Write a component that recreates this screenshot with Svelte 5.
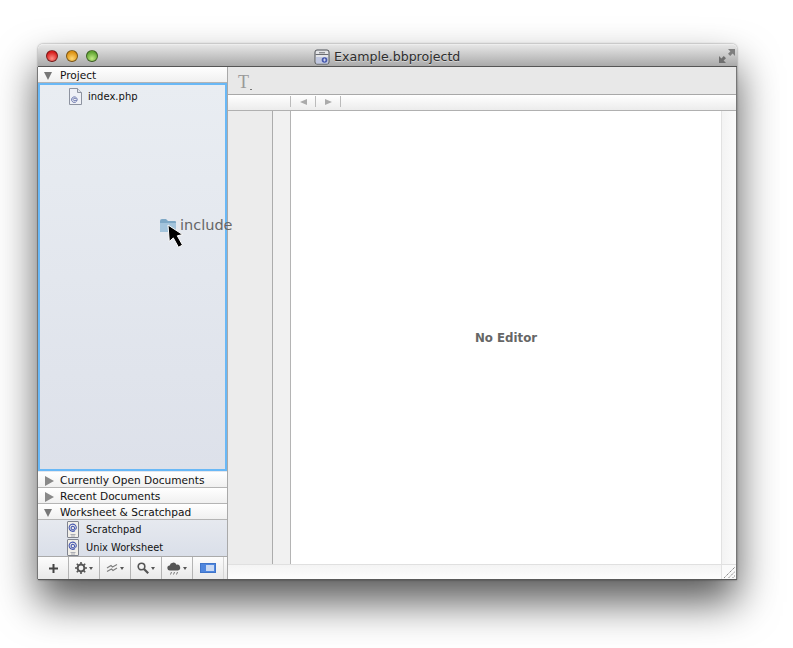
<script>
  const closedGroups = ['Currently Open Documents', 'Recent Documents'];
  const worksheets = ['Scratchpad', 'Unix Worksheet'];
</script>

<main class="page">
  <div class="window">
    <header class="titlebar">
      <div class="lights">
        <span class="light red"></span>
        <span class="light yellow"></span>
        <span class="light green"></span>
      </div>
      <div class="title">
        <svg class="proj-icon" viewBox="0 0 16 16" width="16" height="16">
          <rect x="1" y="1" width="14" height="14" rx="2" fill="#e4e5e8" stroke="#4f5258" />
          <path d="M1.500 5.500h13" stroke="#6b6d72" />
          <rect x="5" y="3" width="6" height="1.400" fill="#8d8f94" />
          <rect x="2" y="8" width="12" height="6.500" fill="#c0c7e0" />
          <circle cx="10.500" cy="11" r="2.800" fill="#4658ad" />
          <path d="M9 11h3M10.500 9.500v3" stroke="#dfe4f5" stroke-width=".8" />
        </svg>
        <span>Example.bbprojectd</span>
      </div>
      <svg class="fullscreen" viewBox="0 0 18 16" width="18" height="16">
        <path d="M10 1h7v7l-2.400-2.400-2.400 2.400-2.200-2.200 2.400-2.400z" fill="#7f7f7f" />
        <path d="M8 15H1V8l2.400 2.400 2.400-2.400 2.200 2.200-2.400 2.400z" fill="#6f6f6f" />
      </svg>
    </header>

    <div class="body">
      <aside class="sidebar">
        <div class="group-head"><span class="tri down"></span><span>Project</span></div>
        <div class="dropzone">
          <div class="file-row">
            <svg class="doc" viewBox="0 0 13 17" width="13" height="17">
              <path d="M.5.5h8l4 4v12H.5z" fill="#eef0f6" stroke="#8d93a0" />
              <path d="M8.500.5v4h4" fill="#dfe2e9" stroke="#8d93a0" />
              <path d="M7.500 13.500a2.800 2.800 0 1 1 .6-2.500v1.500q-1 .7-1.200-.6M6.800 11a1.300 1.300 0 1 0 0 1" fill="none" stroke="#5f6ba6" stroke-width=".9" />
            </svg>
            <span>index.php</span>
          </div>
          <div class="drag-ghost">
            <svg class="folder" viewBox="0 0 18 15" width="18" height="15">
              <path d="M1 3q0-2 2-2h4l2 2h7q1 0 1 1v9q0 1-1 1H2q-1 0-1-1z" fill="#7ea8c6" />
              <path d="M1 5h16v8q0 1-1 1H2q-1 0-1-1z" fill="#a3c4dc" />
            </svg>
            <span>include</span>
            <svg class="cursor" viewBox="0 0 19 25" width="19" height="25">
              <path d="M1 1l1.300 16.500 4-3.600 5.200 9.400 4-2.300-5.200-9.200 5.300-1.200z" fill="#000" stroke="#fff" stroke-width="1" />
            </svg>
          </div>
        </div>

        {#each closedGroups as name}
          <div class="group-head"><span class="tri right"></span><span>{name}</span></div>
        {/each}
        <div class="group-head"><span class="tri down"></span><span>Worksheet &amp; Scratchpad</span></div>
        <div class="worksheets">
          {#each worksheets as name}
            <div class="ws-row">
              <svg class="doc" viewBox="0 0 12 17" width="12" height="17">
                <path d="M1 .5h10q.5 0 .5.500v15q0 .5-.5.500H1q-.5 0-.5-.500V1q0-.5.500-.500z" fill="#f1efe9" stroke="#80848f" />
                <path d="M8 9.500a3.600 3.600 0 1 1 1.300-2.800q0 1.500-1 1.500t-.8-1.200a1.700 1.700 0 1 0-.6 1.300" fill="none" stroke="#4557b0" stroke-width="1.100" />
                <path d="M3.500 13.500h5M4 15h4" stroke="#9a9da6" stroke-width=".8" />
              </svg>
              <span>{name}</span>
            </div>
          {/each}
        </div>
        <div class="side-tools">
          <div class="tool">
            <svg viewBox="0 0 9 9" width="9" height="9"><path d="M4.500 0v9M0 4.500h9" stroke="#444" stroke-width="2" /></svg>
          </div>
          <div class="tool">
            <svg viewBox="0 0 12 12" width="12" height="12">
              <circle cx="6" cy="6" r="3.400" fill="none" stroke="#555" stroke-width="2" />
              <path d="M6 0v2.500M6 9.500V12M0 6h2.500M9.500 6H12M1.800 1.800l1.800 1.800M8.400 8.400l1.800 1.800M1.800 10.200l1.800-1.800M8.400 3.600l1.800-1.800" stroke="#555" stroke-width="1.600" />
            </svg>
            <i class="caret"></i>
          </div>
          <div class="tool">
            <svg viewBox="0 0 12 10" width="12" height="10">
              <path d="M1 5L5 2.500 6.500 4 11 1.500M1 8.500L5.500 6 7 7.500 11 5" fill="none" stroke="#7f7f7f" stroke-width="1.200" />
            </svg>
            <i class="caret"></i>
          </div>
          <div class="tool">
            <svg viewBox="0 0 12 12" width="12" height="12">
              <circle cx="4.500" cy="4.500" r="3.300" fill="none" stroke="#555" stroke-width="1.600" />
              <path d="M7 7l4.200 4.200" stroke="#555" stroke-width="2.200" />
            </svg>
            <i class="caret"></i>
          </div>
          <div class="tool">
            <svg viewBox="0 0 14 13" width="14" height="13">
              <path d="M3 8.500a2.500 2.500 0 0 1-.3-5 3.600 3.600 0 0 1 6.800-.8 2.900 2.900 0 0 1 1.400 5.800z" fill="#555" />
              <path d="M3.500 12.500l1-2.500M6.500 12.500l1-2.500M9.500 12.500l1-2.500" stroke="#777" />
            </svg>
            <i class="caret"></i>
          </div>
          <div class="tool panel">
            <span class="panel-icon"><b></b></span>
          </div>
        </div>
      </aside>

      <section class="main-area">
        <div class="format-bar"><span class="t-glyph">T</span><i class="t-dot"></i></div>
        <div class="nav-bar">
          <div class="nav-btn"><i class="arrow left"></i></div>
          <div class="nav-btn last"><i class="arrow fwd"></i></div>
        </div>
        <div class="editor-row">
          <div class="gutter"></div>
          <div class="gutter-2"></div>
          <div class="editor">No Editor</div>
          <div class="v-scroll"></div>
        </div>
        <div class="bottom-row">
          <div class="h-scroll"></div>
          <div class="grip">
            <svg viewBox="0 0 14 14" width="14" height="14">
              <path d="M2 13L13 2M6.500 13L13 6.500M10.500 13L13 10.500" stroke="#8c8c8c" stroke-dasharray="1.500 .6" />
            </svg>
          </div>
        </div>
      </section>
    </div>
  </div>
</main>

<style>
  :global(body) {
    margin: 0;
    background: #fff;
    overflow: hidden;
  }

  .page {
    width: 793px;
    height: 648px;
    padding: 44px 0 0 38px;
    box-sizing: border-box;
    font-family: "DejaVu Sans", sans-serif;
    font-size: 10.600px;
    color: #111;
  }

  .window {
    width: 699px;
    height: 536px;
    box-sizing: border-box;
    display: flex;
    flex-direction: column;
    border-radius: 5px 5px 0 0;
    border-bottom: 1px solid #5a5a5a;
    box-shadow: 0 22px 42px rgba(0, 0, 0, 0.66), 0 0 2px rgba(0, 0, 0, 0.5);
  }

  .titlebar {
    height: 23px;
    flex: none;
    box-sizing: border-box;
    display: flex;
    align-items: center;
    position: relative;
    background: linear-gradient(#e6e6e6, #aaa);
    border-top: 1px solid #eee;
    border-bottom: 1px solid #555;
    border-radius: 5px 5px 0 0;
  }

  .lights {
    display: flex;
    gap: 8px;
    padding-left: 8px;
  }

  .light {
    width: 12px;
    height: 12px;
    border-radius: 50%;
    box-sizing: border-box;
    border: 1px solid rgba(0, 0, 0, 0.45);
  }

  .red { background: radial-gradient(circle at 50% 75%, #ff8f86, #d7201f 70%); }
  .yellow { background: radial-gradient(circle at 50% 75%, #ffd873, #dd9316 70%); }
  .green { background: radial-gradient(circle at 50% 75%, #c2ec84, #62a534 70%); }

  .title {
    position: absolute;
    left: 276px;
    top: 3px;
    display: flex;
    align-items: center;
    gap: 4px;
    font-size: 12.600px;
    line-height: 17px;
    color: #2e2e2e;
    text-shadow: 0 1px 0 rgba(255, 255, 255, 0.4);
  }

  .fullscreen {
    margin-left: auto;
    margin-right: 1px;
  }

  .body {
    flex: 1;
    display: flex;
    min-height: 0;
  }

  .sidebar {
    width: 191px;
    flex: none;
    display: flex;
    flex-direction: column;
    box-sizing: border-box;
    border-right: 1px solid #a9a9a9;
    background: #e4e7ee;
    border-left: 1px solid #777;
    margin-left: -1px;
  }

  .group-head {
    height: 16px;
    flex: none;
    box-sizing: border-box;
    display: flex;
    align-items: center;
    gap: 7px;
    padding: 2px 0 0 6px;
    background: linear-gradient(#fff, #f0f0f0);
    border-bottom: 1px solid #b4b4b4;
    line-height: 13px;
  }

  .tri {
    width: 0;
    height: 0;
    flex: none;
  }

  .tri.down {
    border-left: 4.500px solid transparent;
    border-right: 4.500px solid transparent;
    border-top: 8px solid #777;
    margin-right: 1px;
  }

  .tri.right {
    border-top: 5px solid transparent;
    border-bottom: 5px solid transparent;
    border-left: 9px solid #888;
    margin: 0 -1px 0 1px;
  }

  .dropzone {
    flex: 1;
    position: relative;
    box-sizing: border-box;
    border: 2px solid #69b8f6;
    background: linear-gradient(#e9edf2, #dde1ea);
    margin-bottom: 1px;
  }

  .file-row {
    display: flex;
    align-items: center;
    gap: 6px;
    padding: 3px 0 0 29px;
    font-size: 10px;
    line-height: 17px;
  }

  .drag-ghost {
    position: absolute;
    left: 119px;
    top: 130px;
    display: flex;
    align-items: center;
    gap: 3px;
    font-size: 14.500px;
    line-height: 20px;
    color: #666;
    white-space: nowrap;
    z-index: 2;
  }

  .cursor {
    position: absolute;
    left: 8px;
    top: 9px;
  }

  .worksheets {
    height: 36px;
    flex: none;
    background: linear-gradient(#e6e9ef, #dadfe9);
  }

  .ws-row {
    height: 18px;
    display: flex;
    align-items: center;
    gap: 7px;
    padding-left: 29px;
    font-size: 9.800px;
  }

  .side-tools {
    height: 23px;
    flex: none;
    display: flex;
    box-sizing: border-box;
    background: linear-gradient(#fcfcfc, #e9e9e9);
    border-top: 1px solid #aaa;
  }

  .tool {
    width: 31px;
    flex: none;
    box-sizing: border-box;
    border-right: 1px solid #b4b4b4;
    display: flex;
    align-items: center;
    justify-content: center;
    gap: 2px;
  }

  .tool.panel {
    border-right: 1px solid #d6d6d6;
  }

  .caret {
    width: 0;
    height: 0;
    border-left: 2.500px solid transparent;
    border-right: 2.500px solid transparent;
    border-top: 3px solid #555;
  }

  .panel-icon {
    width: 16px;
    height: 10px;
    box-sizing: border-box;
    display: block;
    background: #4f86de;
    border: 1px solid #3f74c9;
    position: relative;
  }

  .panel-icon b {
    position: absolute;
    left: 5px;
    top: 1px;
    right: 1px;
    bottom: 1px;
    background: #c9d9f3;
  }

  .main-area {
    flex: 1;
    min-width: 0;
    display: flex;
    flex-direction: column;
    border-right: 1px solid #777;
  }

  .format-bar {
    height: 28px;
    flex: none;
    box-sizing: border-box;
    display: flex;
    align-items: flex-start;
    padding: 5px 0 0 10px;
    background: #e8e8e8;
    border-bottom: 1px solid #a8a8a8;
  }

  .t-glyph {
    font-family: "Liberation Serif", serif;
    font-size: 18px;
    line-height: 20px;
    color: #999;
  }

  .t-dot {
    width: 2px;
    height: 1px;
    margin: 17px 0 0 1px;
    background: #777;
  }

  .nav-bar {
    height: 16px;
    flex: none;
    box-sizing: border-box;
    display: flex;
    padding-left: 62px;
    background: linear-gradient(#fff, #ececec);
    border-bottom: 1px solid #b0b0b0;
  }

  .nav-btn {
    width: 24px;
    height: 11px;
    margin-top: 1px;
    border-left: 1px solid #bbb;
    display: flex;
    align-items: center;
    justify-content: center;
  }

  .nav-btn.last {
    border-right: 1px solid #bbb;
  }

  .arrow {
    width: 0;
    height: 0;
    border-top: 3.500px solid transparent;
    border-bottom: 3.500px solid transparent;
  }

  .arrow.left { border-right: 7px solid #aaa; }
  .arrow.fwd { border-left: 7px solid #aaa; }

  .editor-row {
    flex: 1;
    min-height: 0;
    display: flex;
  }

  .gutter {
    width: 44px;
    flex: none;
    background: #ececec;
    border-right: 1px solid #acacac;
  }

  .gutter-2 {
    width: 17px;
    flex: none;
    background: #f1f1f1;
    border-right: 1px solid #b4b4b4;
  }

  .editor {
    flex: 1;
    display: flex;
    align-items: center;
    justify-content: center;
    background: #fff;
    font-weight: bold;
    font-size: 11.800px;
    color: #666;
    padding-top: 1px;
    box-sizing: border-box;
  }

  .v-scroll {
    width: 14px;
    flex: none;
    background: linear-gradient(90deg, #f3f3f3, #fbfbfb);
    border-left: 1px solid #e2e2e2;
  }

  .bottom-row {
    height: 15px;
    flex: none;
    display: flex;
    border-top: 1px solid #e0e0e0;
    box-sizing: border-box;
  }

  .h-scroll {
    flex: 1;
    background: linear-gradient(#f4f4f4, #fdfdfd);
  }

  .grip {
    width: 15px;
    flex: none;
    background: #fafafa;
    border-left: 1px solid #e2e2e2;
    box-sizing: border-box;
    display: flex;
  }
</style>
